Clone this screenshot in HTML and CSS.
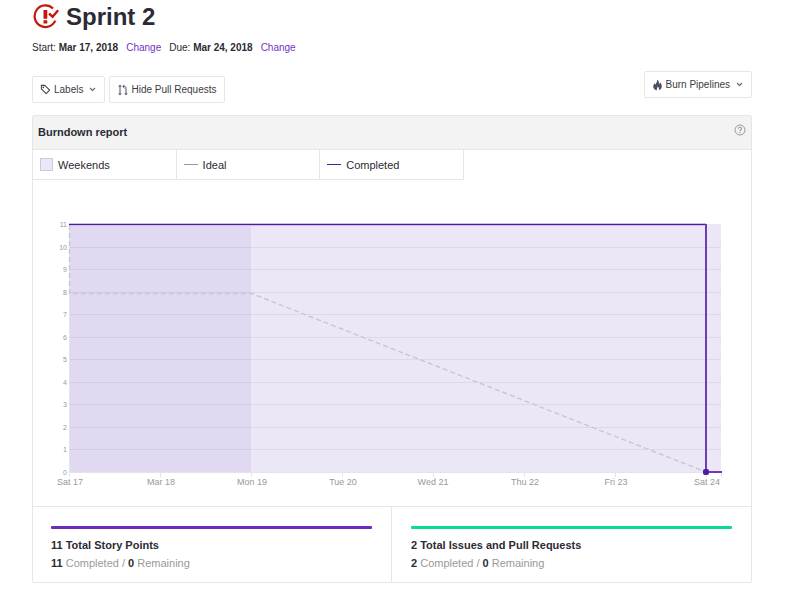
FILE: index.html
```html
<!DOCTYPE html>
<html lang="en">
<head>
<meta charset="utf-8">
<title>Sprint 2</title>
<link rel="stylesheet" href="styles.css">
</head>
<body>
<main class="page">
  <header class="title">
    <svg class="title-icon" viewBox="0 0 27 26" aria-hidden="true">
      <path d="M21 4.500A10.800 10.800 0 1 0 23.300 16.600" fill="none" stroke="#c4170c" stroke-width="2.200"/>
      <path d="M17 9.500l3.600 3.300 5.600-6.600" fill="none" stroke="#c4170c" stroke-width="2.400"/>
      <path d="M11.500 6h3.800v8.800h-3.800zM11.500 16.200h3.800v3.300h-3.800z" fill="#c4170c"/>
    </svg>
    <h1>Sprint 2</h1>
  </header>
  <p class="dates">
    <span>Start: <b>Mar 17, 2018</b></span>
    <a href="#start">Change</a>
    <span>Due: <b>Mar 24, 2018</b></span>
    <a href="#due">Change</a>
  </p>
  <div class="toolbar">
    <button class="btn" type="button">
      <svg class="tag" viewBox="0 0 12 12" aria-hidden="true"><path d="M1.500 1.500h3.700l5.300 5.200-3.800 3.800-5.200-5.300z" fill="none" stroke="#44444c" stroke-width="1.200" stroke-linejoin="round"/><circle cx="3.700" cy="3.700" r=".9" fill="#44444c"/></svg>
      Labels
      <svg class="chevron" viewBox="0 0 7 5" aria-hidden="true"><path d="M1 1l2.500 2.500L6 1" fill="none" stroke="#666" stroke-width="1.100"/></svg>
    </button>
    <button class="btn" type="button">
      <svg class="pull" viewBox="0 0 10 12" aria-hidden="true"><g fill="none" stroke="#4b5068"><path d="M2.500 3.300v5.400M8.500 8.700V4.200C8.500 3 7.900 2.500 6.900 2.500H5.500M7 .8L5.300 2.500l1.700 1.700"/><circle cx="2.500" cy="2.200" r=".9"/><circle cx="2.500" cy="9.800" r=".9"/><circle cx="8.500" cy="9.800" r=".9"/></g></svg>
      Hide Pull Requests
    </button>
    <button class="btn burn" type="button">
      <svg class="flame" viewBox="0 0 10 12" aria-hidden="true"><path d="M4.600.8C7 2.400 6.500 4 6.400 5c.8-.2 1.200-.9 1.200-1.700C9 5 9.500 6.500 9.200 8c-.3 1.800-1.500 2.900-3 3.300.9-1.500.2-2.700-.9-3.700-.1 1.200-1.500 2-.8 3.700C2.400 11 .6 9.700.7 7.500.8 6 1.700 5 2.300 4.300c.1.700.3 1.100.8 1.400C3.300 4 5 3 4.600.8z" fill="#4b5068"/></svg>
      Burn Pipelines
      <svg class="chevron" viewBox="0 0 7 5" aria-hidden="true"><path d="M1 1l2.500 2.500L6 1" fill="none" stroke="#666" stroke-width="1.100"/></svg>
    </button>
  </div>
  <section class="panel">
    <div class="panel-head">
      <h2>Burndown report</h2>
      <button class="help" type="button" aria-label="Help"><svg viewBox="0 0 12 12" aria-hidden="true"><g fill="none" stroke="#999"><circle cx="6" cy="6" r="5"/><path d="M4.400 4.800C4.400 2.700 7.700 2.800 7.600 4.700 7.500 5.800 6 5.700 6 7.200M6 8v1.200" stroke-width="1.100"/></g></svg></button>
    </div>
    <ul class="legend">
      <li><span class="swatch"></span>Weekends</li>
      <li><span class="line ideal"></span>Ideal</li>
      <li><span class="line completed"></span>Completed</li>
    </ul>
    <svg class="chart" viewBox="0 0 718 326" role="img" aria-label="Burndown chart">
      <rect x="36" y="44" width="652" height="248" fill="#ebe7f6"/>
      <rect x="37" y="44" width="181" height="248" fill="#e0d9f1"/>
      <path class="grid" d="M37 67.500H688M37 89.500H688M37 112.500H688M37 134.500H688M37 157.500H688M37 179.500H688M37 202.500H688M37 224.500H688M37 247.500H688M37 269.500H688"/>
      <path class="axis" d="M36.500 44V297M36 292.500H688M127.500 293v4M218.500 293v4M309.500 293v4M400.500 293v4M491.500 293v4M582.500 293v4M673.500 293v4M688.500 293v4"/>
      <path class="ideal-path" d="M36.500 45V113.500H218.500L673 292"/>
      <path class="halo" d="M36 44.500H673"/>
      <path class="done-top" d="M36 44.500H673"/>
      <path class="done-drop" d="M673 44V292H689"/>
      <rect x="670" y="289" width="6" height="6" rx="2" fill="#4f1ba1"/>
      <g class="y-labels">
        <text x="34" y="47">11</text><text x="34" y="70">10</text><text x="34" y="92">9</text><text x="34" y="115">8</text><text x="34" y="137">7</text><text x="34" y="160">6</text><text x="34" y="182">5</text><text x="34" y="205">4</text><text x="34" y="227">3</text><text x="34" y="250">2</text><text x="34" y="272">1</text><text x="34" y="295">0</text>
      </g>
      <g class="x-labels">
        <text x="37" y="305">Sat 17</text><text x="128" y="305">Mar 18</text><text x="219" y="305">Mon 19</text><text x="310" y="305">Tue 20</text><text x="400" y="305">Wed 21</text><text x="492" y="305">Thu 22</text><text x="583" y="305">Fri 23</text><text x="674" y="305">Sat 24</text>
      </g>
    </svg>
    <div class="totals">
      <div class="total">
        <div class="bar points"></div>
        <h3>11 Total Story Points</h3>
        <p><b>11</b> Completed / <b>0</b> Remaining</p>
      </div>
      <div class="total">
        <div class="bar issues"></div>
        <h3>2 Total Issues and Pull Requests</h3>
        <p><b>2</b> Completed / <b>0</b> Remaining</p>
      </div>
    </div>
  </section>
</main>
</body>
</html>
```
FILE: styles.css
```css
* { box-sizing: border-box; }
body {
  margin: 0;
  background: #fff;
  color: #2b2b33;
  font: 11px/16px "Liberation Sans", Arial, sans-serif;
}
h1, h2, h3, p, ul { margin: 0; padding: 0; }
svg { display: block; flex: none; }
.page { padding: 2px 50px 20px 32px; }
.title { display: flex; align-items: center; gap: 7px; height: 30px; }
.title-icon { width: 27px; height: 26px; }
h1 { font-size: 24px; line-height: 30px; }
.dates { display: flex; gap: 8px; margin-top: 8px; font-size: 10px; }
.dates a { color: #7533c1; text-decoration: none; }
.toolbar { display: flex; align-items: flex-end; gap: 4px; height: 32px; margin-top: 15px; }
.btn {
  display: flex;
  align-items: center;
  height: 27px;
  padding: 0 7px;
  border: 1px solid #e6e6e6;
  border-radius: 2px;
  background: #fff;
  color: #3b3b42;
  font: 10px/16px "Liberation Sans", Arial, sans-serif;
}
.burn { align-self: flex-start; margin-left: auto; }
.tag { width: 11px; height: 11px; margin-right: 3px; }
.pull, .flame { width: 11px; height: 12px; margin-right: 3px; }
.chevron { width: 7px; height: 5px; margin: 0 1px 0 6px; }
.panel { margin-top: 12px; border: 1px solid #e6e6e6; border-radius: 2px; }
.panel-head {
  display: flex;
  align-items: center;
  justify-content: space-between;
  height: 34px;
  padding: 0 5px 2px;
  background: #f3f3f3;
  border-bottom: 1px solid #e6e6e6;
}
h2 { font-size: 11px; }
.help { padding: 0; border: 0; background: none; margin-bottom: 4px; }
.help svg { width: 12px; height: 12px; }
.legend { display: flex; list-style: none; }
.legend li {
  display: flex;
  align-items: center;
  flex: 0 0 20%;
  height: 30px;
  padding-left: 7px;
  border: solid #e6e6e6;
  border-width: 0 1px 1px 0;
  line-height: 14px;
}
.swatch { width: 13px; height: 13px; margin-right: 5px; background: #ebe7f8; border: 1px solid #cdc8e0; }
.line { width: 14px; height: 1px; margin-right: 5px; }
.ideal { background: #999; }
.completed { background: #4f1ba1; }
.chart { width: 100%; height: auto; }
.grid { stroke: rgba(70, 50, 100, 0.08); fill: none; }
.axis { stroke: #e4e3e8; fill: none; }
.ideal-path { stroke: #c8c8c8; stroke-width: 1.4; stroke-dasharray: 5 3; fill: none; }
.halo { stroke: #cdbfe8; stroke-width: 3; }
.done-top { stroke: #4f1ba1; }
.done-drop { stroke: #6c3eb4; stroke-width: 2; fill: none; }
.y-labels { font-size: 7px; fill: #999; text-anchor: end; }
.x-labels { font-size: 9px; fill: #999; text-anchor: middle; }
.totals { display: flex; border-top: 1px solid #e6e6e6; }
.total { flex: 1; height: 75px; padding: 19px; padding-left: 18px; }
.total + .total { border-left: 1px solid #e6e6e6; padding-left: 19px; }
.bar { height: 3px; border-radius: 1px; margin-bottom: 7px; }
.points { background: #6b2bbd; }
.issues { background: #08dd92; }
h3 { font-size: 11px; line-height: 18px; }
.total p { line-height: 18px; color: #999; }
.total b { color: #2b2b33; }
```
